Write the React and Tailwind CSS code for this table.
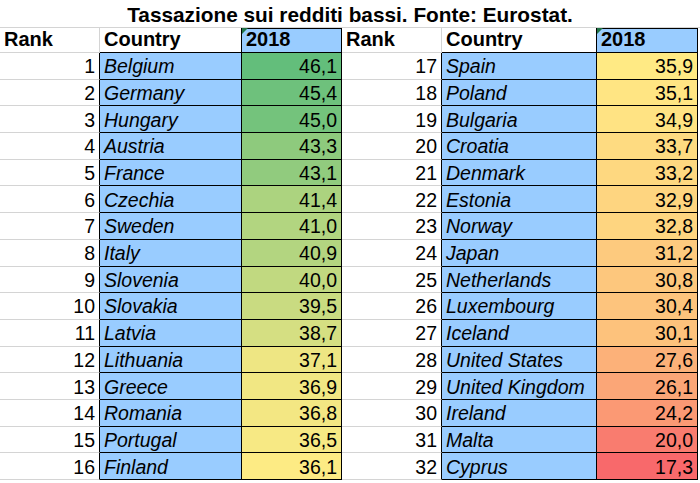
import React from "react";

const left = [
  ["Belgium", 46.1], ["Germany", 45.4], ["Hungary", 45.0], ["Austria", 43.3],
  ["France", 43.1], ["Czechia", 41.4], ["Sweden", 41.0], ["Italy", 40.9],
  ["Slovenia", 40.0], ["Slovakia", 39.5], ["Latvia", 38.7], ["Lithuania", 37.1],
  ["Greece", 36.9], ["Romania", 36.8], ["Portugal", 36.5], ["Finland", 36.1],
];

const right = [
  ["Spain", 35.9], ["Poland", 35.1], ["Bulgaria", 34.9], ["Croatia", 33.7],
  ["Denmark", 33.2], ["Estonia", 32.9], ["Norway", 32.8], ["Japan", 31.2],
  ["Netherlands", 30.8], ["Luxembourg", 30.4], ["Iceland", 30.1], ["United States", 27.6],
  ["United Kingdom", 26.1], ["Ireland", 24.2], ["Malta", 20.0], ["Cyprus", 17.3],
];

// excel 3-colour scale: red -> yellow (median) -> green
const MIN = 17.3, MID = 36.0, MAX = 46.1;
const RED = [248, 105, 107], YEL = [255, 235, 132], GRN = [99, 190, 123];

function mix(a, b, t) {
  return a.map((v, i) => Math.round(v + (b[i] - v) * t));
}

function scaleColor(v) {
  const c = v >= MID ? mix(YEL, GRN, (v - MID) / (MAX - MID)) : mix(RED, YEL, (v - MIN) / (MID - MIN));
  return `rgb(${c[0]}, ${c[1]}, ${c[2]})`;
}

const fmt = (v) => v.toFixed(1).replace(".", ",");

function HeaderCells() {
  return (
    <>
      <div className="flex items-end pb-[1px] pl-1 font-bold text-[20px] border-r border-b border-[#d4d4d4]">Rank</div>
      <div className="flex items-end pb-[1px] pl-1 font-bold text-[20px] border-r border-b border-black">Country</div>
      <div className="relative flex items-end pb-[1px] pl-1 font-bold text-[20px] bg-[#99ccff] border-r border-b border-black shadow-[inset_0_1px_0_#000]">
        <span className="absolute left-0 top-0 w-0 h-0 border-t-[6px] border-t-[#217346] border-r-[6px] border-r-transparent" />
        2018
      </div>
    </>
  );
}

function RowCells({ rank, name, value }) {
  return (
    <>
      <div className="flex items-end pb-[1px] justify-end pr-1 border-r border-r-black border-b border-b-[#d4d4d4]">{rank}</div>
      <div className="flex items-end pb-[1px] pl-1 italic bg-[#99ccff] border-r border-b border-black whitespace-nowrap">{name}</div>
      <div
        className="flex items-end pb-[1px] justify-end pr-1 border-r border-b border-black"
        style={{ backgroundColor: scaleColor(value) }}
      >
        {fmt(value)}
      </div>
    </>
  );
}

export default function App() {
  return (
    <div className="w-[700px] h-[483px] bg-white overflow-hidden text-black font-['Liberation_Sans',Arial,sans-serif]">
      <div className="h-[28px] flex items-center justify-center pt-[2px] font-bold text-[20.8px] border-b border-[#d4d4d4]">
        Tassazione sui redditi bassi. Fonte: Eurostat.
      </div>
      <div className="grid grid-cols-[100px_142px_100px_100px_155px_101px] grid-rows-[25px] auto-rows-[26.7px] text-[19.5px] leading-[1.15]">
        <HeaderCells />
        <HeaderCells />
        {left.map((row, i) => (
          <React.Fragment key={row[0]}>
            <RowCells rank={i + 1} name={row[0]} value={row[1]} />
            <RowCells rank={i + 17} name={right[i][0]} value={right[i][1]} />
          </React.Fragment>
        ))}
      </div>
    </div>
  );
}
